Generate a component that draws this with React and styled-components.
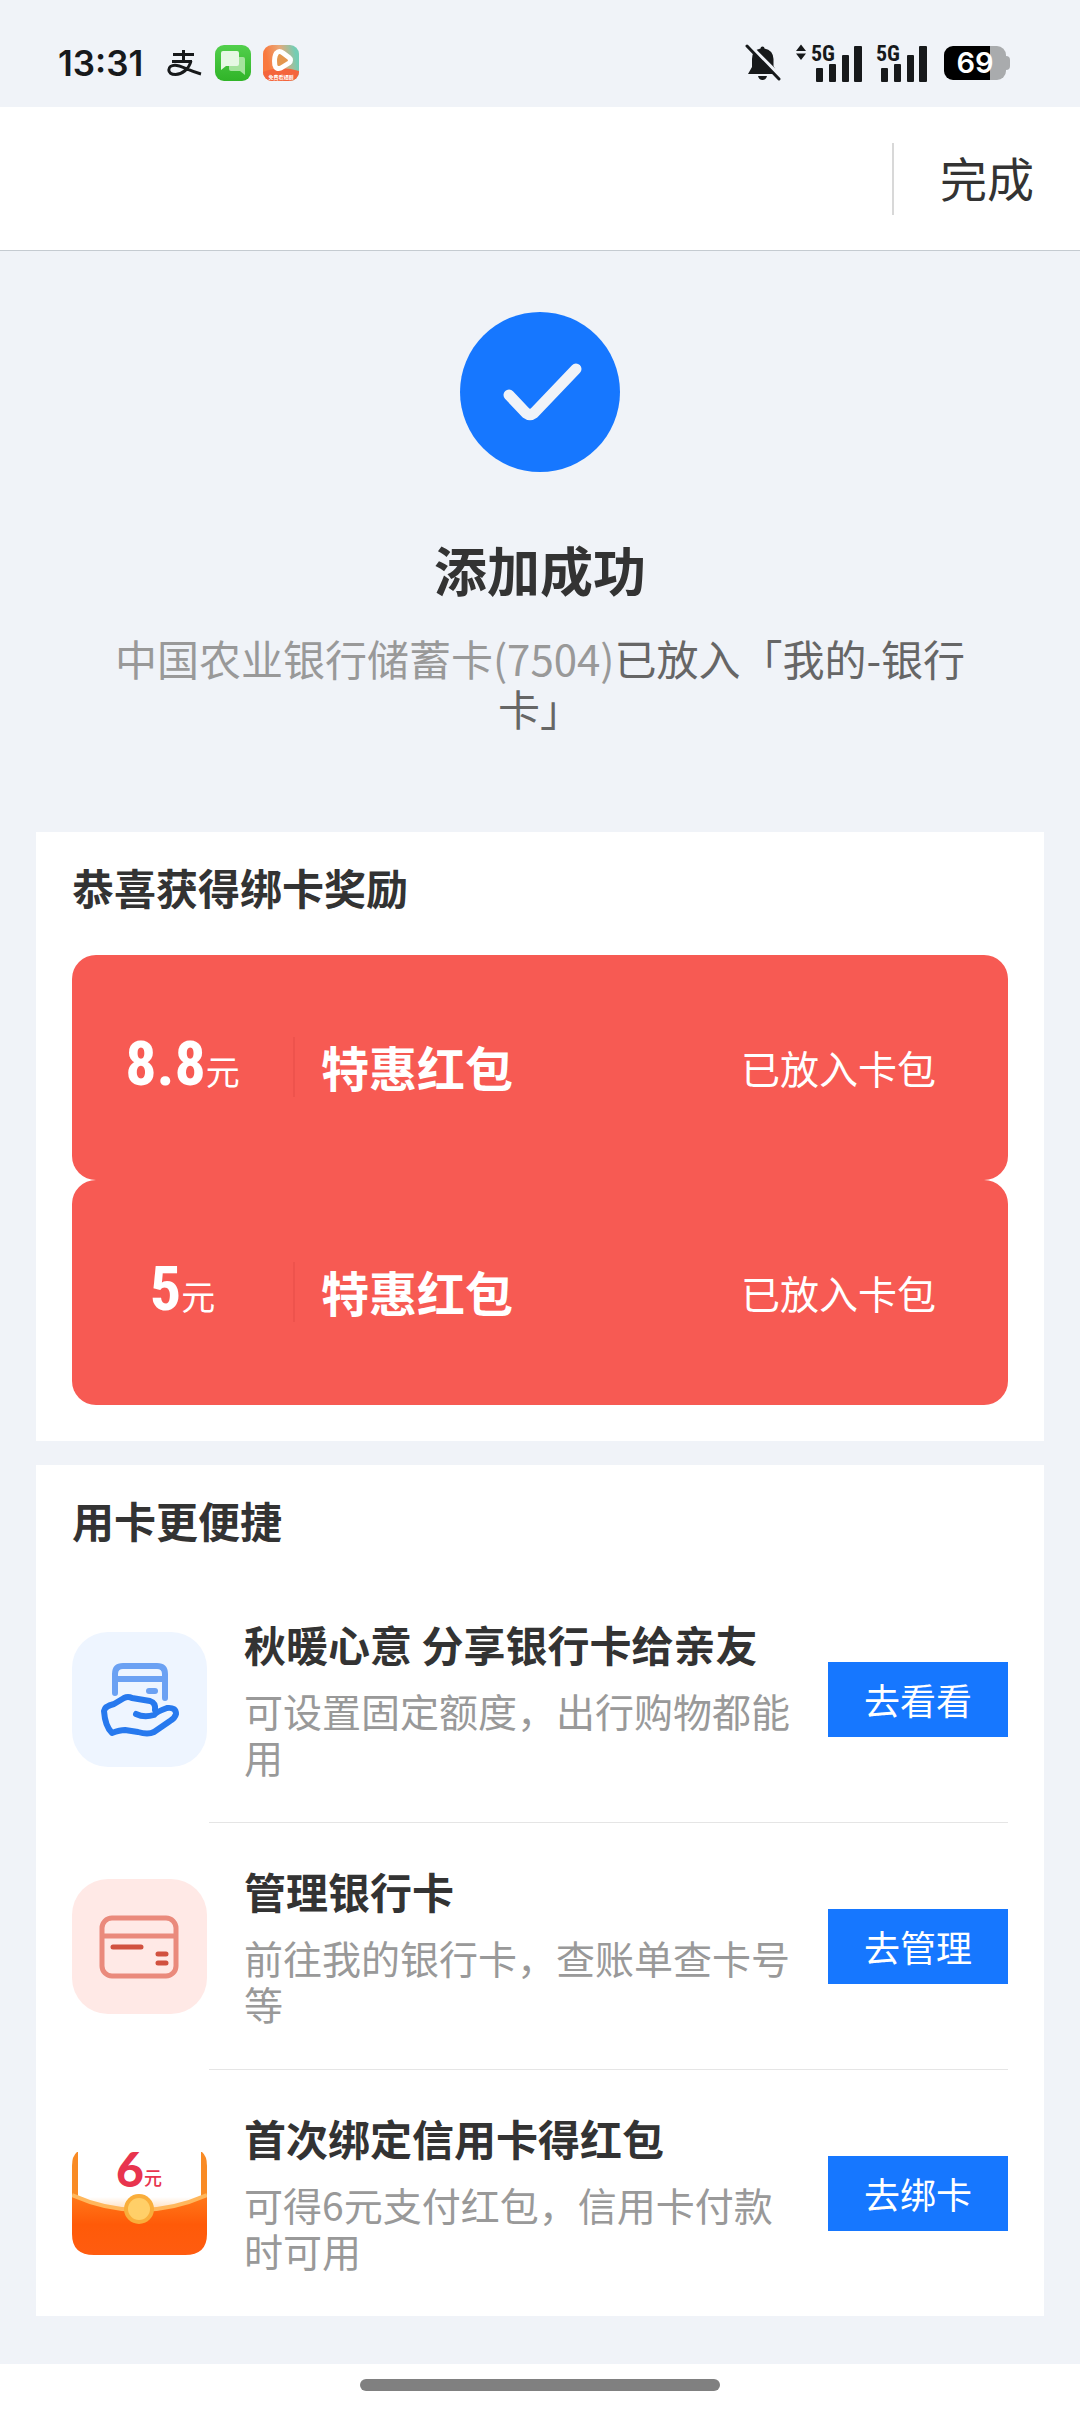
import React from "react";
import styled, { createGlobalStyle } from "styled-components";

const coupons = [
    { id: 1, amount: "8.8", name: "特惠红包", status: "已放入卡包" },
    { id: 2, amount: "5", name: "特惠红包", status: "已放入卡包" },
];

const services = [
    { id: "share", icon: ShareIcon, title: "秋暖心意 分享银行卡给亲友", desc: "可设置固定额度，出行购物都能用", action: "去看看" },
    { id: "manage", icon: ManageIcon, title: "管理银行卡", desc: "前往我的银行卡，查账单查卡号等", action: "去管理" },
    { id: "credit", icon: RedPacketIcon, title: "首次绑定信用卡得红包", desc: "可得6元支付红包，信用卡付款时可用", action: "去绑卡" },
];

const App = () => {
    return (
        <Page>
            <GlobalStyle />
            <StatusBar />
            <Header>
                <DoneButton type="button">完成</DoneButton>
            </Header>
            <Main>
                <Result>
                    <SuccessIcon />
                    <ResultTitle>添加成功</ResultTitle>
                    <ResultText>
                        <CardName>中国农业银行储蓄卡(7504)</CardName>已放入「我的-银行卡」
                    </ResultText>
                </Result>
                <Card>
                    <CardTitle $gap={24}>恭喜获得绑卡奖励</CardTitle>
                    {coupons.map(c => (
                        <Coupon key={c.id}>
                            <Amount>{c.amount}<Unit>元</Unit></Amount>
                            <CouponName>{c.name}</CouponName>
                            <CouponStatus>{c.status}</CouponStatus>
                        </Coupon>
                    ))}
                </Card>
                <Card $flush>
                    <CardTitle $gap={12}>用卡更便捷</CardTitle>
                    {services.map(s => (
                        <Service key={s.id}>
                            <s.icon />
                            <ServiceBody>
                                <ServiceText>
                                    <ServiceTitle>{s.title}</ServiceTitle>
                                    <ServiceDesc>{s.desc}</ServiceDesc>
                                </ServiceText>
                                <ActionButton type="button">{s.action}</ActionButton>
                            </ServiceBody>
                        </Service>
                    ))}
                </Card>
            </Main>
            <HomeBar><Handle /></HomeBar>
        </Page>
    );
};

function StatusBar() {
    return (
        <Status>
            <Time>13:31</Time>
            <AppIcons>
                <svg width="36" height="36" viewBox="0 0 36 36" fill="none" stroke="#17191b">
                    <path d="M6 9.500H27M16.500 5V16M5 16.500H25" strokeWidth="3" />
                    <path d="M24 16C22 24 15 29.500 8.500 29.500C4 29.500 1.800 27.500 1.800 25C1.800 22 4.500 20.300 8 20.300C14 20.300 21 25.500 34 29" strokeWidth="3" />
                </svg>
                <svg width="36" height="36" viewBox="0 0 36 36">
                    <defs>
                        <linearGradient id="green" x1="0" y1="0" x2="0" y2="1">
                            <stop offset="0" stopColor="#52cf4c" />
                            <stop offset="1" stopColor="#30b428" />
                        </linearGradient>
                    </defs>
                    <rect width="36" height="36" rx="9" fill="url(#green)" />
                    <path d="M16 12H28Q30 12 30 14V30L25 26H16Q14 26 14 24V14Q14 12 16 12Z" fill="#a4e39d" />
                    <path d="M8 6H22Q24 6 24 8V19Q24 21 22 21H11L6 25V8Q6 6 8 6Z" fill="#e6f8e4" />
                </svg>
                <svg width="36" height="36" viewBox="0 0 36 36">
                    <defs>
                        <linearGradient id="video" x1="0" y1="0.400" x2="1" y2="0.200">
                            <stop offset="0.100" stopColor="#f9793e" />
                            <stop offset="0.500" stopColor="#e9a878" />
                            <stop offset="0.900" stopColor="#74cdb4" />
                        </linearGradient>
                        <clipPath id="tile"><rect width="36" height="36" rx="9" /></clipPath>
                    </defs>
                    <g clipPath="url(#tile)">
                        <rect width="36" height="36" fill="url(#video)" />
                        <path d="M0 27Q18 20 36 26V36H0Z" fill="#f4653c" />
                        <path d="M13.500 8Q16 5 20 8L26 12.500Q29 15 26 18L18 23Q13 25 11.800 20Q10.800 12 13.500 8Z" fill="#e4974f" stroke="#fff" strokeWidth="5" strokeLinejoin="round" />
                        <text x="18" y="34" textAnchor="middle" fontSize="5" fontWeight="700" fill="#fff">免费看短剧</text>
                    </g>
                </svg>
            </AppIcons>
            <StatusRight>
                <svg width="36" height="37" viewBox="0 0 36 37">
                    <path d="M17.500 2.500Q19.500 2.500 19.500 4.500Q28 6 28.500 15V22L33 30H3L7 23V15Q7 6 15.500 4.500Q15.500 2.500 17.500 2.500ZM13 32H22Q21 36 17.500 36Q14 36 13 32Z" fill="#17191b" />
                    <path d="M4 1L36 33" stroke="#f0f3f8" strokeWidth="4" />
                    <path d="M2 2L34 35" stroke="#17191b" strokeWidth="3" strokeLinecap="round" />
                </svg>
                <Signal data />
                <Signal />
                <Battery>69</Battery>
            </StatusRight>
        </Status>
    );
}

function Signal({ data }) {
    return (
        <svg width={data ? 67 : 54} height="46" viewBox={data ? "-16 -4 67 46" : "0 -4 54 46"} fill="#17191b">
            {data && <path d="M-10 0.500L-5 7H-15ZM-10 16L-5 9.500H-15Z" />}
            <text x="0" y="17" fontSize="22" fontWeight="700" fontFamily="Roboto Condensed, Roboto, sans-serif">5G</text>
            <rect x="5" y="24" width="7" height="14" rx="1" />
            <rect x="18" y="20" width="7" height="18" rx="1" />
            <rect x="31" y="11" width="7" height="27" rx="1" />
            <rect x="43" y="2" width="8" height="36" rx="1" />
        </svg>
    );
}

function SuccessIcon() {
    return (
        <svg width="160" height="160" viewBox="0 0 160 160" fill="none">
            <circle cx="80" cy="80" r="80" fill="#1677ff" />
            <path d="M49 83L66 101Q70 104 74 101L116 57" stroke="#f0f3f8" strokeWidth="11" strokeLinecap="round" strokeLinejoin="round" />
        </svg>
    );
}

function ShareIcon() {
    return (
        <ServiceIcon viewBox="0 0 135 135" fill="none">
            <rect width="135" height="135" rx="36" fill="#eef5ff" />
            <g stroke="#6ba1f3" strokeWidth="6" strokeLinecap="round">
                <path d="M43 61V42Q43 34 51 34H85Q93 34 93 42V66M43 47H93" />
                <path d="M77 59H83" />
            </g>
            <path d="M64 82Q72 86 82 83Q84 80 95 76Q104 75 104 82Q103 86 98 89L82 100Q76 103 66 100L53 98Q48 98 40 101Q33 94 32 79Q33 74 42 72L52 66Q56 64 60 66L78 69Q84 71 83 78" stroke="#2779ee" strokeWidth="6" strokeLinecap="round" strokeLinejoin="round" />
        </ServiceIcon>
    );
}

function ManageIcon() {
    return (
        <ServiceIcon viewBox="0 0 135 135" fill="none">
            <rect width="135" height="135" rx="36" fill="#ffe9e6" />
            <g stroke="#ea8a7c" strokeWidth="5">
                <rect x="30" y="39" width="74" height="58" rx="10" />
                <path d="M30 57H104" />
            </g>
            <path d="M41 68H69M86 75H94M86 84H94" stroke="#d1513f" strokeWidth="5" strokeLinecap="round" />
        </ServiceIcon>
    );
}

function RedPacketIcon() {
    return (
        <ServiceIcon viewBox="0 0 135 135">
            <defs>
                <linearGradient id="packet" x1="0" y1="0" x2="0" y2="1">
                    <stop offset="0" stopColor="#ff7a1a" />
                    <stop offset="0.500" stopColor="#ff5a08" />
                    <stop offset="1" stopColor="#ff5c10" />
                </linearGradient>
                <linearGradient id="paper" x1="0" y1="0" x2="0" y2="1">
                    <stop offset="0.750" stopColor="#fff" />
                    <stop offset="1" stopColor="#ffc58a" />
                </linearGradient>
            </defs>
            <path d="M0 40Q0 30 5 26H130Q135 30 135 40V76H0Z" fill="#f98b25" />
            <rect x="6" y="5" width="123" height="88" rx="7" fill="url(#paper)" />
            <path d="M0 68Q67 100 135 68V108Q135 129 113 129H22Q0 129 0 108Z" fill="url(#packet)" />
            <path d="M0 69Q67 99 135 69" fill="none" stroke="#ffb75c" strokeWidth="4" />
            <circle cx="67" cy="83" r="15" fill="#f9ae3b" />
            <circle cx="67" cy="83" r="11" fill="#ffcf68" />
            <text x="44" y="61" fontSize="48" fontWeight="900" fontFamily="Lato, sans-serif" fill="#e8344e">6</text>
            <text x="72" y="59" fontSize="18" fontWeight="500" fill="#e8344e">元</text>
        </ServiceIcon>
    );
}

const GlobalStyle = createGlobalStyle`
    * {
        box-sizing: border-box;
    }
    body {
        margin: 0;
        background: #fff;
        color: #333;
        font-family: "Noto Sans CJK SC", sans-serif;
    }
    h1, h2, h3, p {
        margin: 0;
    }
    button {
        border: 0;
        padding: 0;
        font-family: inherit;
    }
    svg {
        display: block;
        flex: none;
    }
`

const Page = styled.div`
    display: flex;
    flex-direction: column;
    min-height: 100vh;
`

const Status = styled.div`
    display: flex;
    align-items: center;
    height: 107px;
    padding: 18px 74px 0 58px;
    background: #f0f3f8;
`

const Time = styled.span`
    color: #17191b;
    font-family: Inter, sans-serif;
    font-size: 35px;
    font-weight: 600;
    line-height: 36px;
`

const AppIcons = styled.div`
    display: flex;
    gap: 12px;
    margin-left: 24px;
`

const StatusRight = styled.div`
    display: flex;
    align-items: center;
    gap: 14px;
    margin-left: auto;
`

const Battery = styled.span`
    position: relative;
    width: 62px;
    height: 34px;
    border-radius: 9px;
    background: linear-gradient(90deg, #000 46px, #a9abad 46px);
    color: #fff;
    font-family: Inter, sans-serif;
    font-size: 29px;
    font-weight: 600;
    line-height: 34px;
    text-align: center;

    &::after {
        content: "";
        position: absolute;
        top: 10px;
        right: -4px;
        width: 4px;
        height: 14px;
        border-radius: 0 4px 4px 0;
        background: #a9abad;
    }
`

const Header = styled.header`
    display: flex;
    justify-content: flex-end;
    align-items: center;
    height: 144px;
    background: #fff;
    border-bottom: 1px solid #c5cbd1;
`

const DoneButton = styled.button`
    height: 72px;
    padding: 0 46px 4px;
    border-left: 2px solid #d8d8d8;
    background: none;
    color: #333;
    font-size: 47px;
    line-height: 68px;
`

const Main = styled.main`
    flex: 1;
    padding: 0 36px 48px;
    background: #f0f3f8;
`

const Result = styled.section`
    display: flex;
    flex-direction: column;
    align-items: center;
    padding: 61px 60px 99px;
    text-align: center;
`

const ResultTitle = styled.h1`
    margin-top: 65px;
    font-size: 53px;
    font-weight: 700;
    line-height: 64px;
`

const ResultText = styled.p`
    margin-top: 32px;
    color: #666;
    font-size: 42px;
    line-height: 50px;
`

const CardName = styled.span`
    color: #999;
`

const Card = styled.section`
    padding: 34px 36px ${p => (p.$flush ? 0 : 36)}px;
    background: #fff;

    & + & {
        margin-top: 24px;
    }
`

const CardTitle = styled.h2`
    margin-bottom: ${p => p.$gap}px;
    padding-bottom: 23px;
    font-size: 42px;
    font-weight: 700;
    line-height: 42px;
`

const Coupon = styled.div`
    display: flex;
    align-items: center;
    height: 225px;
    padding: 0 72px 2px 0;
    border-radius: 24px;
    background: #f75a53;
    color: #fff;
`

const Amount = styled.div`
    width: 221px;
    padding-bottom: 6px;
    font-family: "Roboto Condensed", Roboto, sans-serif;
    font-size: 62px;
    font-weight: 700;
    line-height: 72px;
    text-align: center;
`

const Unit = styled.span`
    font-family: "Noto Sans CJK SC", sans-serif;
    font-size: 34px;
    font-weight: 400;
    line-height: 34px;
`

const CouponName = styled.h3`
    flex: 1;
    padding: 0 0 2px 26px;
    border-left: 2px solid #ee534d;
    font-size: 48px;
    font-weight: 700;
    line-height: 58px;
`

const CouponStatus = styled.span`
    font-size: 39px;
    line-height: 48px;
`

const Service = styled.div`
    display: flex;
    align-items: center;
    gap: 2px;
`

const ServiceIcon = styled.svg`
    width: 135px;
    height: 135px;
`

const ServiceBody = styled.div`
    box-sizing: content-box;
    flex: 1;
    display: flex;
    align-items: center;
    gap: 36px;
    height: 246px;
    padding-left: 35px;
    border-bottom: 1px solid #e5e5e5;

    ${Service}:last-child & {
        border-bottom: 0;
    }
`

const ServiceText = styled.div`
    flex: 1;
`

const ServiceTitle = styled.h3`
    font-size: 42px;
    font-weight: 700;
    line-height: 50px;
`

const ServiceDesc = styled.p`
    margin-top: 18px;
    color: #999;
    font-size: 39px;
    line-height: 46px;
`

const ActionButton = styled.button`
    flex: none;
    width: 180px;
    height: 75px;
    background: #1677ff;
    color: #fff;
    font-size: 36px;
    line-height: 72px;
`

const HomeBar = styled.footer`
    display: flex;
    justify-content: center;
    padding: 15px 0 21px;
    background: #fff;
`

const Handle = styled.div`
    width: 360px;
    height: 12px;
    border-radius: 6px;
    background: #808080;
`

export default App;
